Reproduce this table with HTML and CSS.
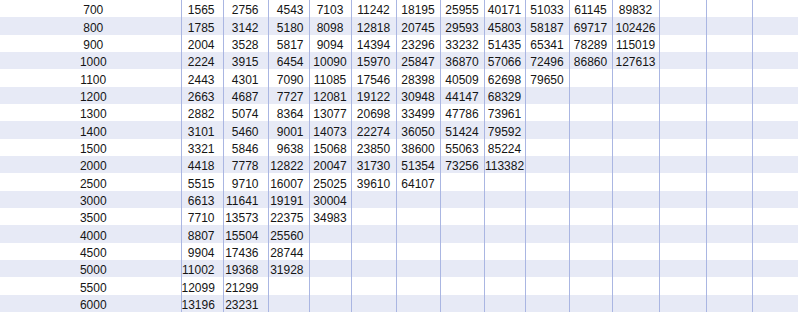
FILE: index.html
```html
<!DOCTYPE html>
<html>
<head>
<meta charset="utf-8">
<link rel="stylesheet" href="styles.css">
</head>
<body>
<table class="grid">
<colgroup>
<col class="c-label"><col class="c1"><col class="c2"><col class="c3"><col class="c4"><col class="c5"><col class="c6"><col class="c7"><col class="c8"><col class="c9"><col class="c10"><col class="c11"><col class="c12"><col class="c13"><col class="c14">
</colgroup>
<tbody>
<tr><td>700</td><td>1565</td><td>2756</td><td>4543</td><td>7103</td><td>11242</td><td>18195</td><td>25955</td><td>40171</td><td>51033</td><td>61145</td><td>89832</td><td></td><td></td><td></td></tr>
<tr><td>800</td><td>1785</td><td>3142</td><td>5180</td><td>8098</td><td>12818</td><td>20745</td><td>29593</td><td>45803</td><td>58187</td><td>69717</td><td>102426</td><td></td><td></td><td></td></tr>
<tr><td>900</td><td>2004</td><td>3528</td><td>5817</td><td>9094</td><td>14394</td><td>23296</td><td>33232</td><td>51435</td><td>65341</td><td>78289</td><td>115019</td><td></td><td></td><td></td></tr>
<tr><td>1000</td><td>2224</td><td>3915</td><td>6454</td><td>10090</td><td>15970</td><td>25847</td><td>36870</td><td>57066</td><td>72496</td><td>86860</td><td>127613</td><td></td><td></td><td></td></tr>
<tr><td>1100</td><td>2443</td><td>4301</td><td>7090</td><td>11085</td><td>17546</td><td>28398</td><td>40509</td><td>62698</td><td>79650</td><td></td><td></td><td></td><td></td><td></td></tr>
<tr><td>1200</td><td>2663</td><td>4687</td><td>7727</td><td>12081</td><td>19122</td><td>30948</td><td>44147</td><td>68329</td><td></td><td></td><td></td><td></td><td></td><td></td></tr>
<tr><td>1300</td><td>2882</td><td>5074</td><td>8364</td><td>13077</td><td>20698</td><td>33499</td><td>47786</td><td>73961</td><td></td><td></td><td></td><td></td><td></td><td></td></tr>
<tr><td>1400</td><td>3101</td><td>5460</td><td>9001</td><td>14073</td><td>22274</td><td>36050</td><td>51424</td><td>79592</td><td></td><td></td><td></td><td></td><td></td><td></td></tr>
<tr><td>1500</td><td>3321</td><td>5846</td><td>9638</td><td>15068</td><td>23850</td><td>38600</td><td>55063</td><td>85224</td><td></td><td></td><td></td><td></td><td></td><td></td></tr>
<tr><td>2000</td><td>4418</td><td>7778</td><td>12822</td><td>20047</td><td>31730</td><td>51354</td><td>73256</td><td>113382</td><td></td><td></td><td></td><td></td><td></td><td></td></tr>
<tr><td>2500</td><td>5515</td><td>9710</td><td>16007</td><td>25025</td><td>39610</td><td>64107</td><td></td><td></td><td></td><td></td><td></td><td></td><td></td><td></td></tr>
<tr><td>3000</td><td>6613</td><td>11641</td><td>19191</td><td>30004</td><td></td><td></td><td></td><td></td><td></td><td></td><td></td><td></td><td></td><td></td></tr>
<tr><td>3500</td><td>7710</td><td>13573</td><td>22375</td><td>34983</td><td></td><td></td><td></td><td></td><td></td><td></td><td></td><td></td><td></td><td></td></tr>
<tr><td>4000</td><td>8807</td><td>15504</td><td>25560</td><td></td><td></td><td></td><td></td><td></td><td></td><td></td><td></td><td></td><td></td><td></td></tr>
<tr><td>4500</td><td>9904</td><td>17436</td><td>28744</td><td></td><td></td><td></td><td></td><td></td><td></td><td></td><td></td><td></td><td></td><td></td></tr>
<tr><td>5000</td><td>11002</td><td>19368</td><td>31928</td><td></td><td></td><td></td><td></td><td></td><td></td><td></td><td></td><td></td><td></td><td></td></tr>
<tr><td>5500</td><td>12099</td><td>21299</td><td></td><td></td><td></td><td></td><td></td><td></td><td></td><td></td><td></td><td></td><td></td><td></td></tr>
<tr><td>6000</td><td>13196</td><td>23231</td><td></td><td></td><td></td><td></td><td></td><td></td><td></td><td></td><td></td><td></td><td></td><td></td></tr>
</tbody>
</table>
</body>
</html>
```
FILE: styles.css
```css
html, body {
  margin: 0;
  padding: 0;
  background: #ffffff;
}

.grid {
  table-layout: fixed;
  width: 798px;
  border-collapse: collapse;
  border-spacing: 0;
  font-family: "Liberation Sans", Arial, sans-serif;
  font-size: 12px;
  color: #151515;
}

.c-label { width: 181px; }
.c1 { width: 42px; }
.c2 { width: 45px; }
.c3 { width: 41px; }
.c4 { width: 42px; }
.c5 { width: 45px; }
.c6 { width: 44px; }
.c7 { width: 44px; }
.c8 { width: 41px; }
.c9 { width: 44px; }
.c10 { width: 43px; }
.c11 { width: 47px; }
.c12 { width: 47px; }
.c13 { width: 46px; }
.c14 { width: 46px; }

.grid tr {
  height: 17.333px;
}

.grid tr:nth-child(even) {
  background: #e7eaf6;
}

.grid td {
  padding: 0;
  line-height: 13px;
  vertical-align: bottom;
  text-align: center;
  white-space: nowrap;
  overflow: hidden;
  border-left: 1px solid #aab6e2;
}

.grid td:first-child {
  border-left: none;
  padding-left: 6px;
}

.grid td:nth-child(2) {
  text-align: right;
  padding-right: 8px;
}

.grid td:nth-child(3) {
  text-align: right;
  padding-right: 9px;
}

.grid td:nth-child(4) {
  text-align: right;
  padding-right: 5px;
}
```
